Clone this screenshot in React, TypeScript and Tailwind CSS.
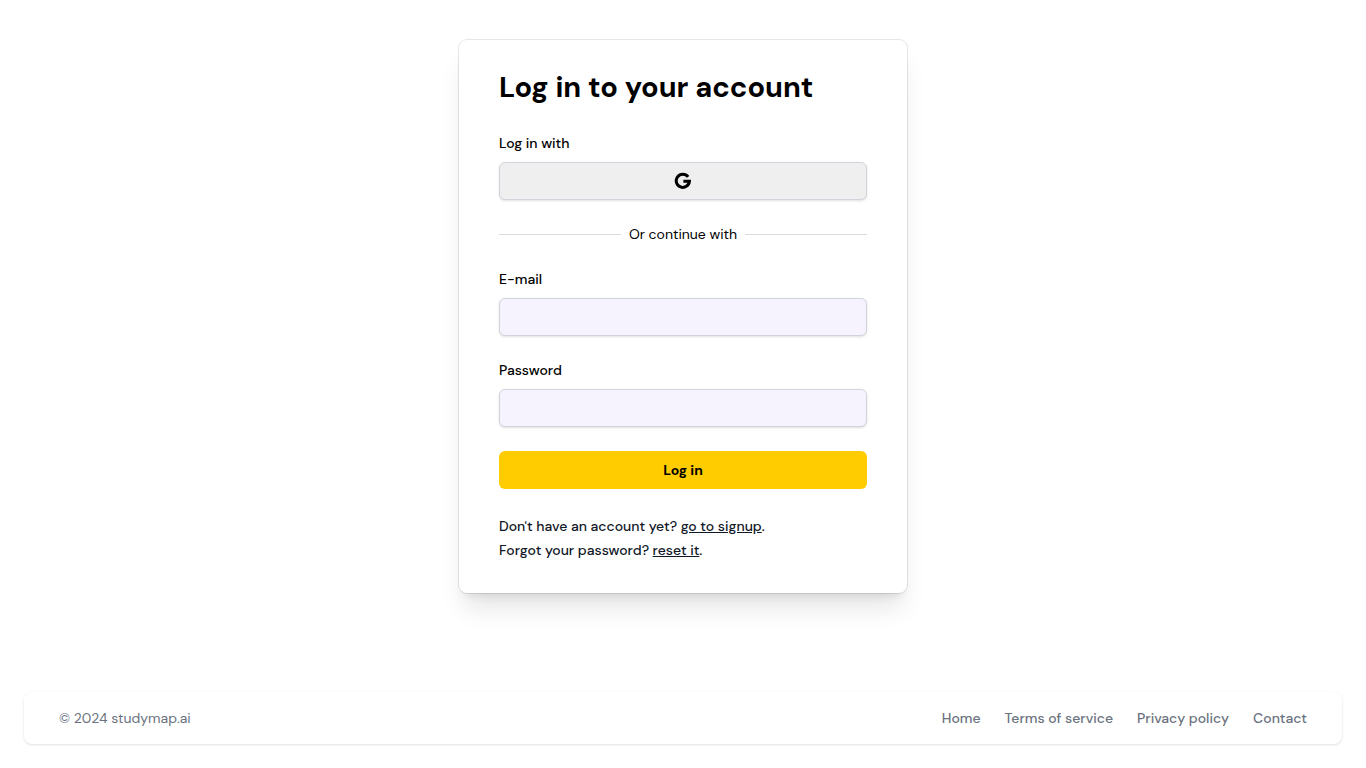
import React from "react";

const inputClass =
  "mt-2 block h-[38px] w-full rounded-md border border-[#d1d5db] bg-[#f6f3ff] px-3 text-sm text-black shadow-sm";

const footerLinks = ["Home", "Terms of service", "Privacy policy", "Contact"];

function GoogleIcon() {
  return (
    <svg className="size-6" viewBox="0 0 24 24" fill="none" stroke="currentColor" strokeWidth="3" aria-hidden="true">
      <path d="M17.1 7.8A6.6 6.6 0 1 0 18.4 12.3H12.4" />
    </svg>
  );
}

export default function App() {
  return (
    <div className="flex min-h-screen flex-col justify-between bg-white font-['DM_Sans','Open_Sans',sans-serif] text-black antialiased">
      <main className="px-4 pt-10 pb-10">
        <div className="mx-auto w-full max-w-[448px] rounded-lg bg-white px-10 pt-[25px] pb-[31px] shadow-xl ring-1 ring-gray-900/10">
          <h1 className="text-[29px] leading-[44px] font-bold">Log in to your account</h1>
          <p className="mt-6 text-sm leading-[21px] font-medium">Log in with</p>
          <button
            type="button"
            aria-label="Log in with Google"
            className="mt-2 flex h-[38px] w-full items-center justify-center rounded-md border border-[#d1d5db] bg-[#efefef] shadow-sm"
          >
            <GoogleIcon />
          </button>
          <div className="mt-6 flex items-center gap-2 text-sm leading-[21px]">
            <span className="h-px flex-1 bg-[#d9dbdf]" />
            <span>Or continue with</span>
            <span className="h-px flex-1 bg-[#d9dbdf]" />
          </div>
          <form className="mt-6">
            <label htmlFor="email" className="block text-sm leading-[21px] font-medium">E-mail</label>
            <input id="email" type="email" className={inputClass} />
            <label htmlFor="password" className="mt-6 block text-sm leading-[21px] font-medium">Password</label>
            <input id="password" type="password" className={inputClass} />
            <button type="submit" className="mt-6 h-[38px] w-full rounded-md bg-[#ffcc00] text-sm font-bold">
              Log in
            </button>
          </form>
          <div className="mt-[25px] text-sm leading-6 font-medium text-[#111827]">
            <p>
              Don't have an account yet? <a href="#signup" className="underline">go to signup</a>.
            </p>
            <p>
              Forgot your password? <a href="#reset" className="underline">reset it</a>.
            </p>
          </div>
        </div>
      </main>
      <footer className="m-6 flex items-center justify-between rounded-lg bg-white px-[35px] py-4 text-sm text-[#6b7280] shadow-sm">
        <span>© 2024 studymap.ai</span>
        <nav className="flex gap-6 font-medium">
          {footerLinks.map((label) => (
            <a key={label} href="#">{label}</a>
          ))}
        </nav>
      </footer>
    </div>
  );
}
